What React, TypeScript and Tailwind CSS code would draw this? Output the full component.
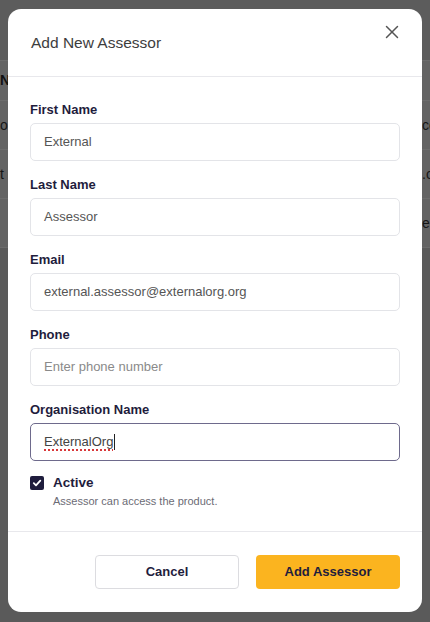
import { X } from 'lucide-react'

const font = { fontFamily: '"Liberation Sans", Arial, sans-serif' }

const rows = [
  { left: 'or', right: 'co' },
  { left: 't c', right: '.c' },
  { left: '', right: 'e' },
]

function Field({ label, value, placeholder }: { label: string; value?: string; placeholder?: string }) {
  return (
    <div className="flex flex-col">
      <label className="mb-[5px] text-[13px] leading-[17px] font-bold text-[#1f1d3d]">{label}</label>
      <div className="flex h-[38px] items-center rounded-[5px] border border-[#e3e4e8] px-[13px] text-[13px]">
        {value ? (
          <span className="text-[#555]">{value}</span>
        ) : (
          <span className="text-[#8a8a8a]">{placeholder}</span>
        )}
      </div>
    </div>
  )
}

export default function App() {
  return (
    <div className="relative h-[622px] w-full overflow-hidden bg-[#5a5a5a]" style={font}>
      {/* dimmed page behind the dialog */}
      <div className="h-[60px] bg-[#5c5c5c]" />
      <div className="bg-[#636363]">
        <div className="flex h-[40px] items-center border-t border-[#6c6c6c] text-[14px] font-bold text-[#111]">
          Name
        </div>
        {rows.map((r, i) => (
          <div
            key={i}
            className="flex h-[49px] items-center overflow-hidden whitespace-nowrap border-t border-[#6c6c6c] text-[14px] text-[#151515]"
          >
            <div className="w-[422px] shrink-0">{r.left}</div>
            <div className="shrink-0">{r.right}</div>
          </div>
        ))}
      </div>
      <div className="border-t border-[#6c6c6c]" />

      {/* dialog */}
      <div className="absolute left-[8px] top-[9px] flex h-[603px] w-[414px] flex-col rounded-[13px] bg-white">
        <div className="flex h-[68px] shrink-0 items-center border-b border-[#e8e8ec] px-[23px]">
          <h2 className="text-[15.5px] text-[#3d3d3d]">Add New Assessor</h2>
        </div>
        <button className="absolute right-[19px] top-[12px] text-[#555]">
          <X size={22} strokeWidth={1.6} />
        </button>

        <div className="flex flex-1 flex-col gap-[15px] border-b border-[#e8e8ec] px-[22px] pt-6">
          <Field label="First Name" value="External" />
          <Field label="Last Name" value="Assessor" />
          <Field label="Email" value="external.assessor@externalorg.org" />
          <Field label="Phone" placeholder="Enter phone number" />
          <div className="flex flex-col">
            <label className="mb-[5px] text-[13px] leading-[17px] font-bold text-[#1f1d3d]">Organisation Name</label>
            <div className="flex h-[38px] items-center rounded-[5px] border border-[#6e6a8c] px-[13px] text-[13px] text-[#444]">
              <span className="underline decoration-dotted decoration-[#d9383a] decoration-[1.5px] underline-offset-[3px]">
                ExternalOrg
              </span>
              <span className="ml-px h-[16px] w-px bg-[#222]" />
            </div>
          </div>
          <div className="mt-[-1px] flex gap-[9px]">
            <div className="mt-[1px] flex h-[14px] w-[14px] items-center justify-center rounded-[2px] bg-[#1f1d3d]">
              <svg width="10" height="10" viewBox="0 0 10 10" fill="none">
                <path d="M1.8 5.2 4 7.3 8.3 2.6" stroke="white" strokeWidth="1.8" strokeLinecap="round" strokeLinejoin="round" />
              </svg>
            </div>
            <div className="flex flex-col">
              <span className="text-[13.5px] leading-[16px] font-bold text-[#1f1d3d]">Active</span>
              <span className="mt-[3px] text-[11px] leading-[14px] text-[#6b6b75]">Assessor can access the product.</span>
            </div>
          </div>
        </div>

        <div className="flex h-[80px] shrink-0 items-center justify-end gap-[17px] px-[22px] pb-[1px]">
          <button className="h-[34px] w-[144px] rounded-[4px] border border-[#dcdce0] bg-white text-[13px] font-bold text-[#1f1d3d]">
            Cancel
          </button>
          <button className="h-[34px] w-[144px] rounded-[4px] bg-[#fbb41f] text-[13px] font-bold text-[#1f1d3d]">
            Add Assessor
          </button>
        </div>
      </div>
    </div>
  )
}
